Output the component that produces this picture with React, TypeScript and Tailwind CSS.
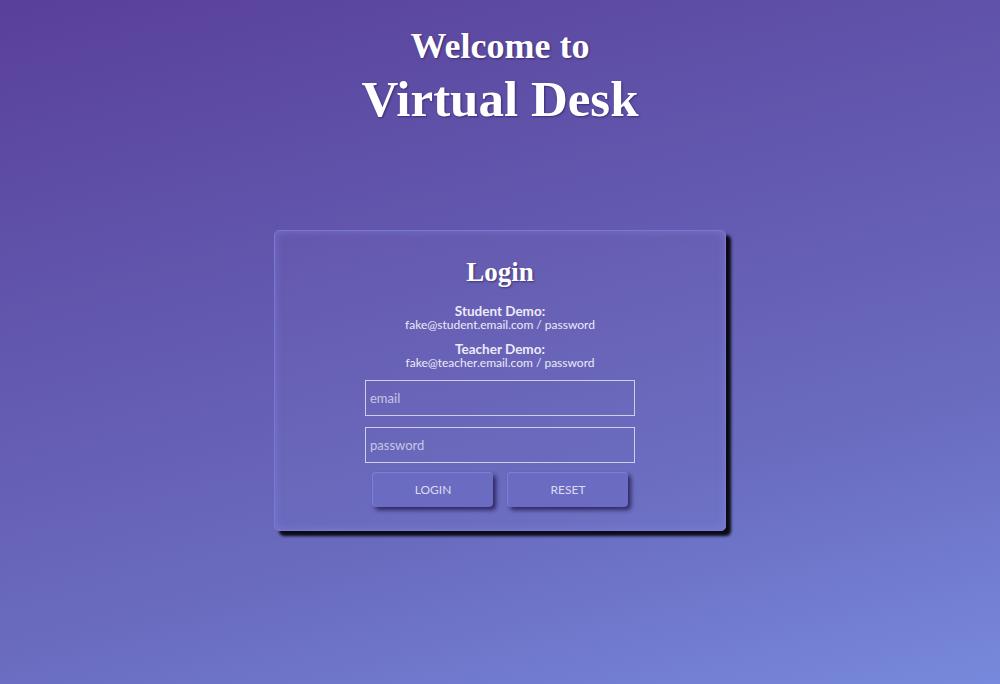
import React from 'react'

const serif = { fontFamily: '"Liberation Serif", "Times New Roman", serif' }

export default function App() {
  return (
    <div
      className="w-full h-[684px] flex flex-col items-center bg-[linear-gradient(165deg,#59409a_0%,#6a6cc0_70%,#7789dc_100%)] text-white"
      style={{ fontFamily: 'Lato, "Open Sans", sans-serif' }}
    >
      {/* Heading */}
      <div className="flex flex-col items-center pt-[24px] [text-shadow:1px_1px_2px_rgba(40,20,80,0.6)]" style={serif}>
        <h1 className="text-[36px] leading-[44px] font-bold">Welcome to</h1>
        <h2 className="text-[51px] leading-[62px] font-bold">Virtual Desk</h2>
      </div>

      {/* Login card */}
      <div className="mt-[100px] w-[452px] h-[301px] rounded-[5px] bg-white/[0.02] border border-[#7a78d6] shadow-[5px_5px_3px_rgba(0,0,0,0.9),inset_0_0_8px_rgba(140,140,230,0.5)] flex flex-col items-center">
        <h3 className="mt-[25px] text-[27px] leading-[32px] font-bold [text-shadow:1px_1px_2px_rgba(40,20,80,0.6)]" style={serif}>
          Login
        </h3>

        <div className="mt-[17px] flex flex-col items-center text-[#eceaf8]">
          <p className="text-[13.5px] leading-[13px] font-bold">Student Demo:</p>
          <p className="text-[12px] leading-[13px]">fake@student.email.com / password</p>
          <p className="mt-[12px] text-[13.5px] leading-[13px] font-bold">Teacher Demo:</p>
          <p className="text-[12px] leading-[13px]">fake@teacher.email.com / password</p>
        </div>

        <div className="mt-[11px] flex flex-col gap-[11px]">
          <input
            placeholder="email"
            className="w-[270px] h-[36px] px-[4px] bg-transparent border border-[#d0cde8] text-[13px] text-white placeholder:text-[#c9c6e6] outline-none"
          />
          <input
            placeholder="password"
            type="password"
            className="w-[270px] h-[36px] px-[4px] bg-transparent border border-[#d0cde8] text-[13px] text-white placeholder:text-[#c9c6e6] outline-none"
          />
        </div>

        <div className="mt-[9px] flex gap-[14px]">
          {['LOGIN', 'RESET'].map(label => (
            <button
              key={label}
              className="w-[121px] h-[35px] rounded-[4px] bg-[#6a6bc1] border-t border-l border-[#7e7fdc] shadow-[3px_3px_4px_rgba(20,10,60,0.7)] text-[12px] text-[#dcdaf2]"
            >
              {label}
            </button>
          ))}
        </div>
      </div>
    </div>
  )
}
